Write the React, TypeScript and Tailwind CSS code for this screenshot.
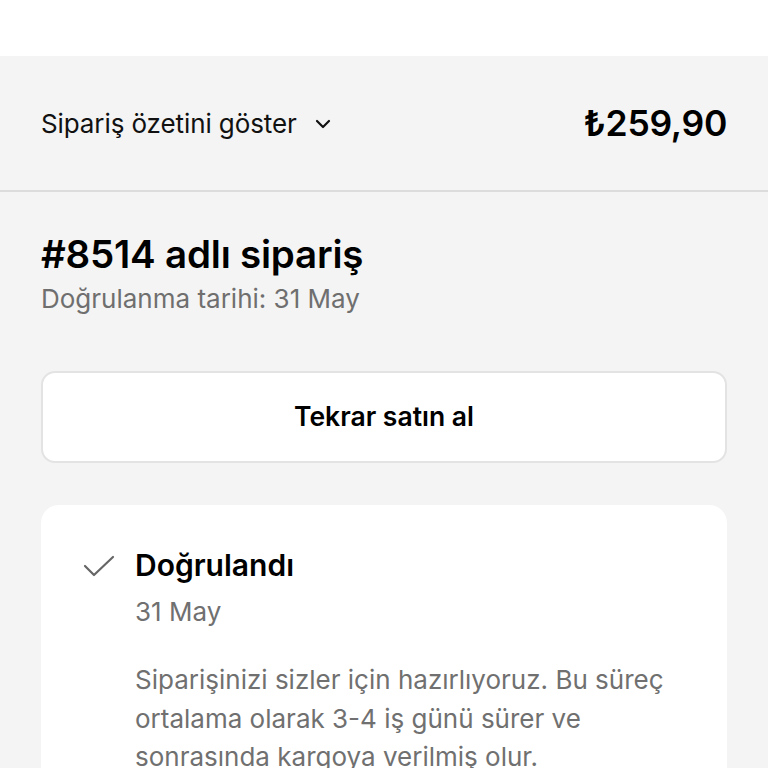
import React from "react";

export default function App() {
  return (
    <div className="w-[768px] h-[768px] overflow-hidden bg-[#f4f4f4] font-['Inter',sans-serif] text-black">
      <div className="h-[56px] bg-white" />
      <div className="h-[134px] px-[41px] flex items-center justify-between">
        <div className="flex items-center gap-[18px] mt-[1px]">
          <span className="text-[26px] text-[#111] tracking-[-0.1px]">Sipariş özetini göster</span>
          <svg width="16" height="10" viewBox="0 0 16 10" fill="none">
            <path d="M2 2l6 6 6-6" stroke="#111" strokeWidth="2.2" strokeLinecap="round" strokeLinejoin="round" />
          </svg>
        </div>
        <span className="text-[35.5px] font-semibold tracking-[-0.3px] mt-[1px]">₺259,90</span>
      </div>
      <div className="h-[2px] bg-[#dcdcdc]" />
      <div className="px-[41px] pt-[38px]">
        <div className="text-[38.5px] font-semibold leading-[48px] tracking-[-0.2px]">#8514 adlı sipariş</div>
        <div className="text-[26px] leading-[36px] text-[#6f6f6f] mt-[3px]">Doğrulanma tarihi: 31 May</div>
        <div className="mt-[54px] h-[92px] rounded-[14px] border-2 border-[#e3e3e3] bg-white flex items-center justify-center">
          <span className="text-[26.5px] font-semibold">Tekrar satın al</span>
        </div>
        <div className="mt-[42px] rounded-t-[18px] bg-white pt-[40px] pl-[42px] pr-[30px] h-[300px]">
          <div className="flex gap-[20px]">
            <svg width="32" height="22" viewBox="0 0 32 22" fill="none" className="mt-[10px] shrink-0">
              <path d="M2 11l9 9L30 2" stroke="#666" strokeWidth="2.2" strokeLinecap="round" strokeLinejoin="round" />
            </svg>
            <div>
              <div className="text-[30px] font-semibold leading-[40px]">Doğrulandı</div>
              <div className="text-[26px] leading-[36px] text-[#707070] mt-[9px]">31 May</div>
              <p className="text-[26px] leading-[38.5px] text-[#707070] mt-[31px] max-w-[545px]">
                Siparişinizi sizler için hazırlıyoruz. Bu süreç ortalama olarak 3-4 iş günü sürer ve sonrasında kargoya verilmiş olur.
              </p>
            </div>
          </div>
        </div>
      </div>
    </div>
  );
}
